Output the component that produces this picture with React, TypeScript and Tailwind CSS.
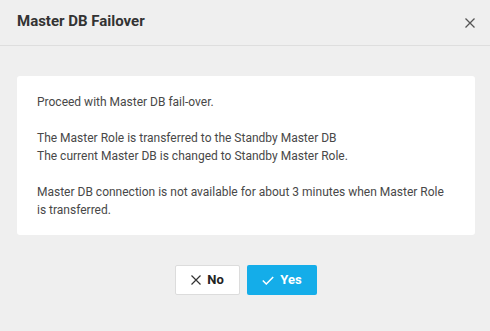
export default function App() {
  return (
    <div
      className="w-[490px] h-[331px] bg-[#efefef] text-[#333]"
      style={{ fontFamily: "Roboto, 'Liberation Sans', sans-serif" }}
    >
      {/* Header */}
      <div className="h-[46px] flex items-center justify-between pl-[17px] pr-[14px] border-b border-[#dedede]">
        <h1 className="text-[15px] font-bold text-[#333] -mt-[2px]">Master DB Failover</h1>
        <button className="w-[12px] h-[12px] flex items-center justify-center text-[#555]">
          <svg width="10" height="10" viewBox="0 0 10 10">
            <path d="M0.5 0.5 L9.5 9.5 M9.5 0.5 L0.5 9.5" stroke="currentColor" strokeWidth="1.3" />
          </svg>
        </button>
      </div>

      {/* Body */}
      <div className="pl-[17px] pr-[15px] pt-[30px]">
        <div className="bg-white rounded-[3px] pl-[20px] pr-[24px] pt-[17px] pb-[16px] text-[12px] leading-[18px] text-[#484848]">
          <p>Proceed with Master DB fail-over.</p>
          <p className="mt-[18px]">The Master Role is transferred to the Standby Master DB</p>
          <p>The current Master DB is changed to Standby Master Role.</p>
          <p className="mt-[18px]">
            Master DB connection is not available for about 3 minutes when Master Role is transferred.
          </p>
        </div>
      </div>

      {/* Buttons */}
      <div className="flex justify-center gap-[7px] mt-[30px] pl-[2px]">
        <button className="w-[65px] h-[30px] bg-white border border-[#dcdcdc] rounded-[2px] flex items-center justify-center gap-[6px] text-[13px] font-bold text-[#222]">
          <svg width="10" height="10" viewBox="0 0 10 10">
            <path d="M0.5 0.5 L9.5 9.5 M9.5 0.5 L0.5 9.5" stroke="#333" strokeWidth="1.2" />
          </svg>
          No
        </button>
        <button className="w-[70px] h-[30px] bg-[#14ade9] rounded-[2px] flex items-center justify-center gap-[6px] text-[13px] font-bold text-white">
          <svg width="12" height="9" viewBox="0 0 12 9">
            <path d="M0.8 4.5 L4.3 8 L11.2 1" stroke="white" strokeWidth="1.5" fill="none" />
          </svg>
          Yes
        </button>
      </div>
    </div>
  );
}
